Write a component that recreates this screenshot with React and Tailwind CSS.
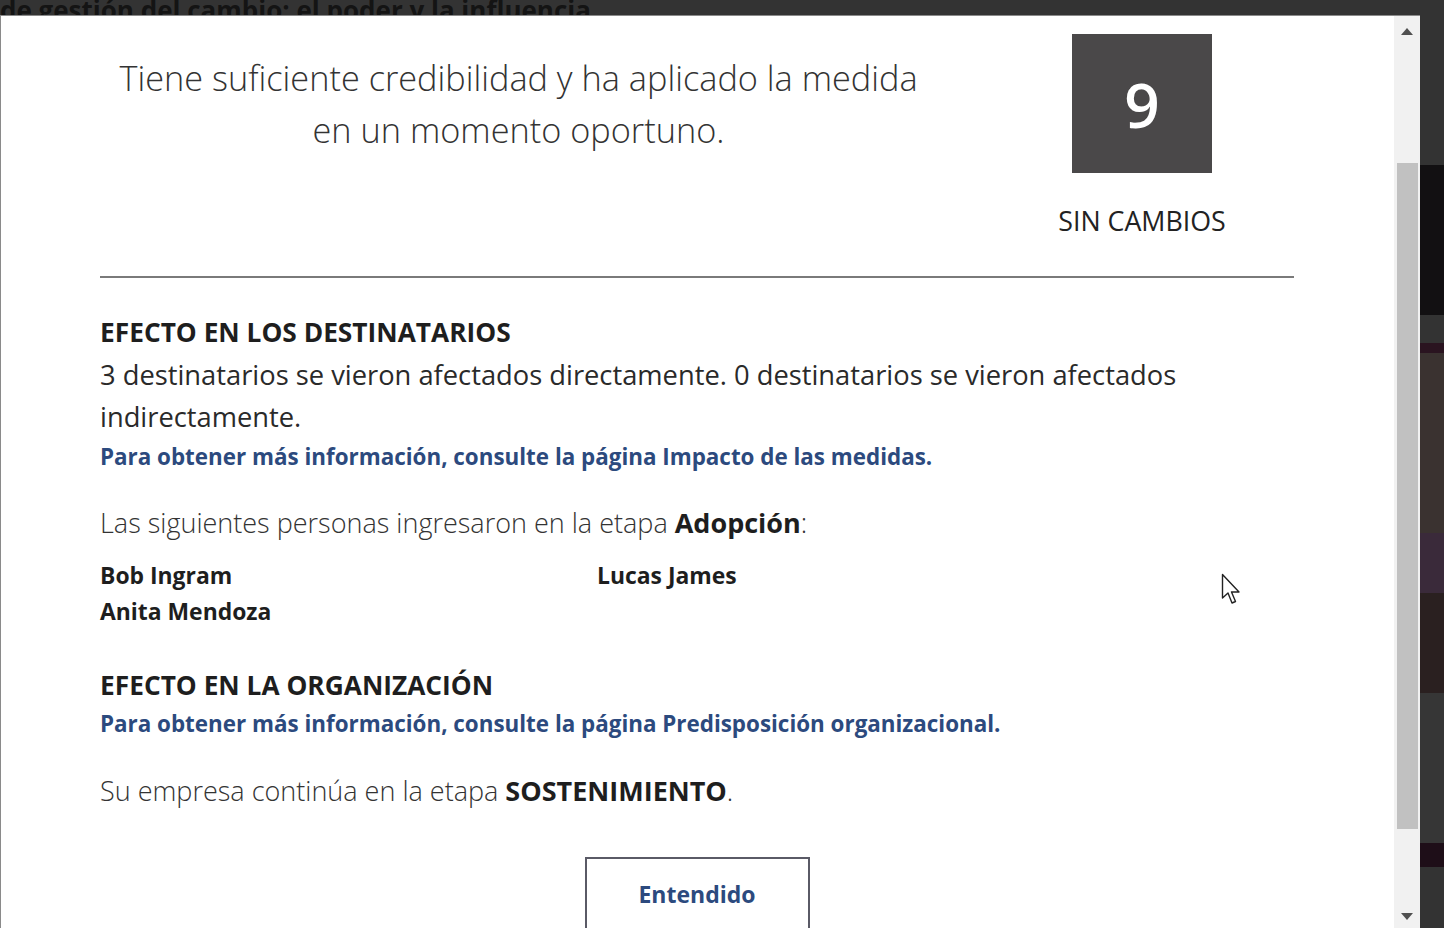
import React from "react";

const font = { fontFamily: "'Open Sans', 'Noto Sans', sans-serif" };

function Cursor() {
  return (
    <svg width="22" height="34" viewBox="0 0 22 34" className="absolute left-[1221px] top-[573px]">
      <path
        d="M1.5 1.5 L1.5 25 L7 20 L11 30 L14.5 28.5 L10.5 19 L18 19 Z"
        fill="#fff"
        stroke="#222"
        strokeWidth="1.4"
        strokeLinejoin="round"
      />
    </svg>
  );
}

function Scrollbar() {
  return (
    <div className="w-[26px] h-full bg-[#f1f1f1] flex flex-col items-center">
      <div className="h-[30px] flex items-center justify-center pt-[1px]">
        <div className="w-0 h-0 border-l-[6px] border-r-[6px] border-b-[7px] border-l-transparent border-r-transparent border-b-[#505050]" />
      </div>
      <div className="mt-[117px] w-[21px] h-[666px] bg-[#c1c1c1]" />
      <div className="mt-auto h-[24px] flex items-center justify-center">
        <div className="w-0 h-0 border-l-[6px] border-r-[6px] border-t-[7px] border-l-transparent border-r-transparent border-t-[#505050]" />
      </div>
    </div>
  );
}

export default function App() {
  const people = ["Bob Ingram", "Lucas James", "Anita Mendoza"];

  return (
    <div className="relative w-[1444px] h-[928px] bg-[#333333] overflow-hidden" style={font}>
      {/* page behind the modal */}
      <div className="flex h-[15px] items-start overflow-hidden">
        <div className="text-[26px] font-bold leading-[1] text-[#141414] -mt-[3px] whitespace-nowrap">
          de gestión del cambio: el poder y la influencia
        </div>
        <div className="ml-[540px] text-[15px] font-bold tracking-[2px] text-[#555] mt-[8px]">OPERACIONES</div>
        <div className="ml-[55px] text-[15px] font-bold tracking-[2px] text-[#555] mt-[8px]">ANALISIS</div>
      </div>
      <div className="flex flex-col items-end">
        <div className="w-[24px] flex flex-col">
          <div className="h-[150px]" />
          <div className="h-[150px] bg-[#121012]" />
          <div className="h-[28px]" />
          <div className="h-[10px] bg-[#2a1420]" />
          <div className="h-[180px] bg-[#3a3230]" />
          <div className="h-[60px] bg-[#3a2a3a]" />
          <div className="h-[100px] bg-[#2a2020]" />
          <div className="h-[150px] bg-[#363636]" />
          <div className="h-[24px] bg-[#1e0e18]" />
        </div>
      </div>

      {/* modal */}
      <div className="absolute left-0 top-[15px] w-[1420px] bottom-0 bg-white border-l border-t border-[#8a8a8a] flex">
        <div className="flex-1 pl-[99px] pr-[100px] pt-[18px] text-[#222]">
          <div className="flex">
            <div className="w-[837px] pt-[18px] text-center text-[34.3px] leading-[52px] font-light text-[#333]">
              Tiene suficiente credibilidad y ha aplicado la medida
              <br />
              en un momento oportuno.
            </div>
            <div className="ml-[105px] w-[200px] flex flex-col items-center">
              <div className="w-[140px] h-[139px] bg-[#4a4849] flex items-center justify-center">
                <span className="text-white text-[62px] font-semibold leading-none">9</span>
              </div>
              <div className="mt-[30px] text-[26.8px] leading-[36px] text-[#222]">SIN CAMBIOS</div>
            </div>
          </div>

          <div className="mt-[37px] h-[2px] bg-[#7a7a7a]" />

          <h2 className="mt-[37px] text-[26.3px] leading-[34px] font-bold text-[#1e1e1e]">
            EFECTO EN LOS DESTINATARIOS
          </h2>
          <p className="mt-[5px] text-[27.3px] leading-[42px] text-[#2a2a2a]">
            3 destinatarios se vieron afectados directamente. 0 destinatarios se vieron afectados indirectamente.
          </p>
          <p className="mt-[4px] text-[22.4px] leading-[30px] font-bold text-[#2c4a7e]">
            Para obtener más información, consulte la página Impacto de las medidas.
          </p>

          <p className="mt-[30px] text-[27px] leading-[42px] font-light text-[#333]">
            Las siguientes personas ingresaron en la etapa <span className="font-bold text-[#1e1e1e]">Adopción</span>:
          </p>
          <div className="mt-[14px] grid grid-cols-2 w-[994px] text-[22.9px] leading-[36px] font-bold text-[#1e1e1e]">
            {people.map((p) => (
              <div key={p}>{p}</div>
            ))}
          </div>

          <h2 className="mt-[38px] text-[26.3px] leading-[34px] font-bold text-[#1e1e1e]">
            EFECTO EN LA ORGANIZACIÓN
          </h2>
          <p className="mt-[7px] text-[22.4px] leading-[30px] font-bold text-[#2c4a7e]">
            Para obtener más información, consulte la página Predisposición organizacional.
          </p>
          <p className="mt-[31px] text-[27px] leading-[42px] font-light text-[#333]">
            Su empresa continúa en la etapa <span className="font-bold text-[#1e1e1e]">SOSTENIMIENTO</span>.
          </p>

          <div className="mt-[45px] flex justify-center">
            <button className="w-[225px] h-[76px] border-2 border-[#5a5a66] bg-white text-[23px] font-bold text-[#2c4a7e] flex items-start justify-center pt-[18px]">
              Entendido
            </button>
          </div>
        </div>
        <Scrollbar />
      </div>

      <Cursor />
    </div>
  );
}
